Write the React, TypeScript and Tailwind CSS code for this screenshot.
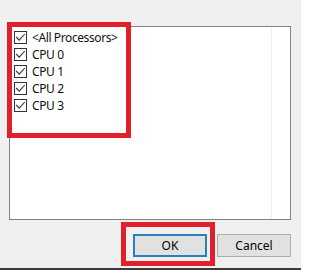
import React from "react";

const items = ["<All Processors>", "CPU 0", "CPU 1", "CPU 2", "CPU 3"];

function Check() {
  return (
    <span className="flex h-[13px] w-[13px] shrink-0 items-center justify-center border border-[#333333] bg-white">
      <svg width="11" height="11" viewBox="0 0 11 11">
        <polyline points="1.2,5 4.2,8.2 9.8,2" fill="none" stroke="#333333" strokeWidth="1.1" />
      </svg>
    </span>
  );
}

export default function App() {
  return (
    <div
      className="relative flex h-[270px] w-[301px] flex-col overflow-hidden bg-[#f0f0f0] text-[12px] text-black"
      style={{ fontFamily: '"Noto Sans", "Open Sans", sans-serif' }}
    >
      <div className="ml-[9px] mt-[26px] flex h-[194px] w-[282px] border border-[#828282] bg-white">
        <div className="flex flex-1 flex-col border-r border-[#f0f0f0] pt-[2px]">
          {items.map((t) => (
            <div key={t} className="flex h-[17px] items-center gap-[5px] pl-[4px] leading-none">
              <Check />
              <span className="tracking-[-0.4px] text-[#111111]">{t}</span>
            </div>
          ))}
        </div>
        <div className="w-[18px]" />
      </div>
      <div className="ml-[133px] mt-[14px] flex gap-[10px]">
        <button className="flex h-[23px] w-[74px] items-center justify-center border-2 border-[#2c7fbf] bg-[#e1e1e1] leading-none">
          OK
        </button>
        <button className="flex h-[23px] w-[74px] items-center justify-center border border-[#adadad] bg-[#e1e1e1] leading-none">
          Cancel
        </button>
      </div>
      <div className="mt-auto h-[2px] w-full bg-[#3c3c3c]" />

      <div className="pointer-events-none absolute left-[7px] top-[22px] h-[116px] w-[124px] border-[5px] border-[#e0202a]" />
      <div className="pointer-events-none absolute left-[121px] top-[222px] h-[44px] w-[94px] border-[5px] border-[#e0202a]" />
    </div>
  );
}
